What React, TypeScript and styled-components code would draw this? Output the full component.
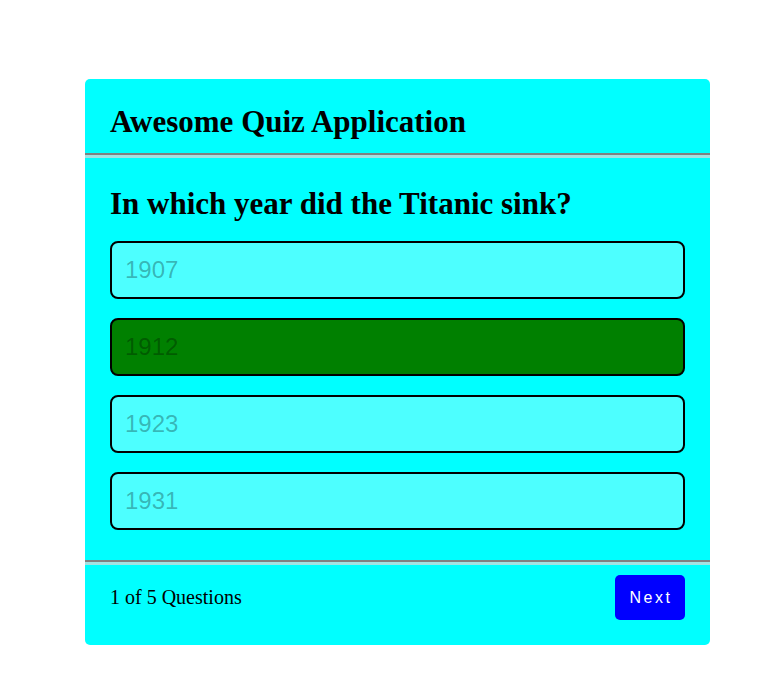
import React, { useState } from "react";
import styled, { createGlobalStyle } from "styled-components";

const Global = createGlobalStyle`
  html, body { margin: 0; padding: 0; background: #ffffff; }
  body { font-family: "Liberation Serif", "Times New Roman", serif; }
`;

const Card = styled.div`
  width: 625px;
  margin: 79px 0 0 85px;
  background: #00ffff;
  border-radius: 5px;
  box-sizing: border-box;
`;

const Header = styled.div`
  padding: 25px 25px 14px;
`;

const Title = styled.h1`
  margin: 0;
  font-size: 31px;
  font-weight: bold;
  line-height: 35px;
`;

const Divider = styled.div`
  height: 3px;
  border-top: 2px solid #808080;
  background: #a2e2e2;
`;

const Body = styled.div`
  padding: 28px 25px 30px;
`;

const Question = styled.h2`
  margin: 0 0 20px;
  font-size: 31px;
  font-weight: bold;
  line-height: 35px;
`;

const Options = styled.div`
  display: flex;
  flex-direction: column;
  gap: 19px;
`;

const Option = styled.button<{ $selected?: boolean }>`
  height: 58px;
  box-sizing: border-box;
  border: 2px solid #000;
  border-radius: 8px;
  background: ${(p) => (p.$selected ? "#008000" : "rgba(255,255,255,0.3)")};
  color: rgba(0, 0, 0, 0.3);
  font-family: "Liberation Sans", Arial, sans-serif;
  font-size: 24px;
  text-align: left;
  padding: 0 13px;
  cursor: pointer;
`;

const Footer = styled.div`
  display: flex;
  align-items: center;
  justify-content: space-between;
  padding: 10px 25px 25px;
`;

const Count = styled.span`
  font-size: 20px;
`;

const NextButton = styled.button`
  width: 70px;
  height: 45px;
  border: none;
  border-radius: 5px;
  background: #0000ff;
  color: #fff;
  font-family: "Liberation Sans", Arial, sans-serif;
  font-size: 16px;
  letter-spacing: 2.5px;
  padding: 0 0 0 2px;
  cursor: pointer;
`;

const answers = ["1907", "1912", "1923", "1931"];

export default function App() {
  const [selected, setSelected] = useState(1);
  return (
    <>
      <Global />
      <Card>
        <Header>
          <Title>Awesome Quiz Application</Title>
        </Header>
        <Divider />
        <Body>
          <Question>In which year did the Titanic sink?</Question>
          <Options>
            {answers.map((a, i) => (
              <Option key={a} $selected={i === selected} onClick={() => setSelected(i)}>
                {a}
              </Option>
            ))}
          </Options>
        </Body>
        <Divider />
        <Footer>
          <Count>1 of 5 Questions</Count>
          <NextButton>Next</NextButton>
        </Footer>
      </Card>
    </>
  );
}
